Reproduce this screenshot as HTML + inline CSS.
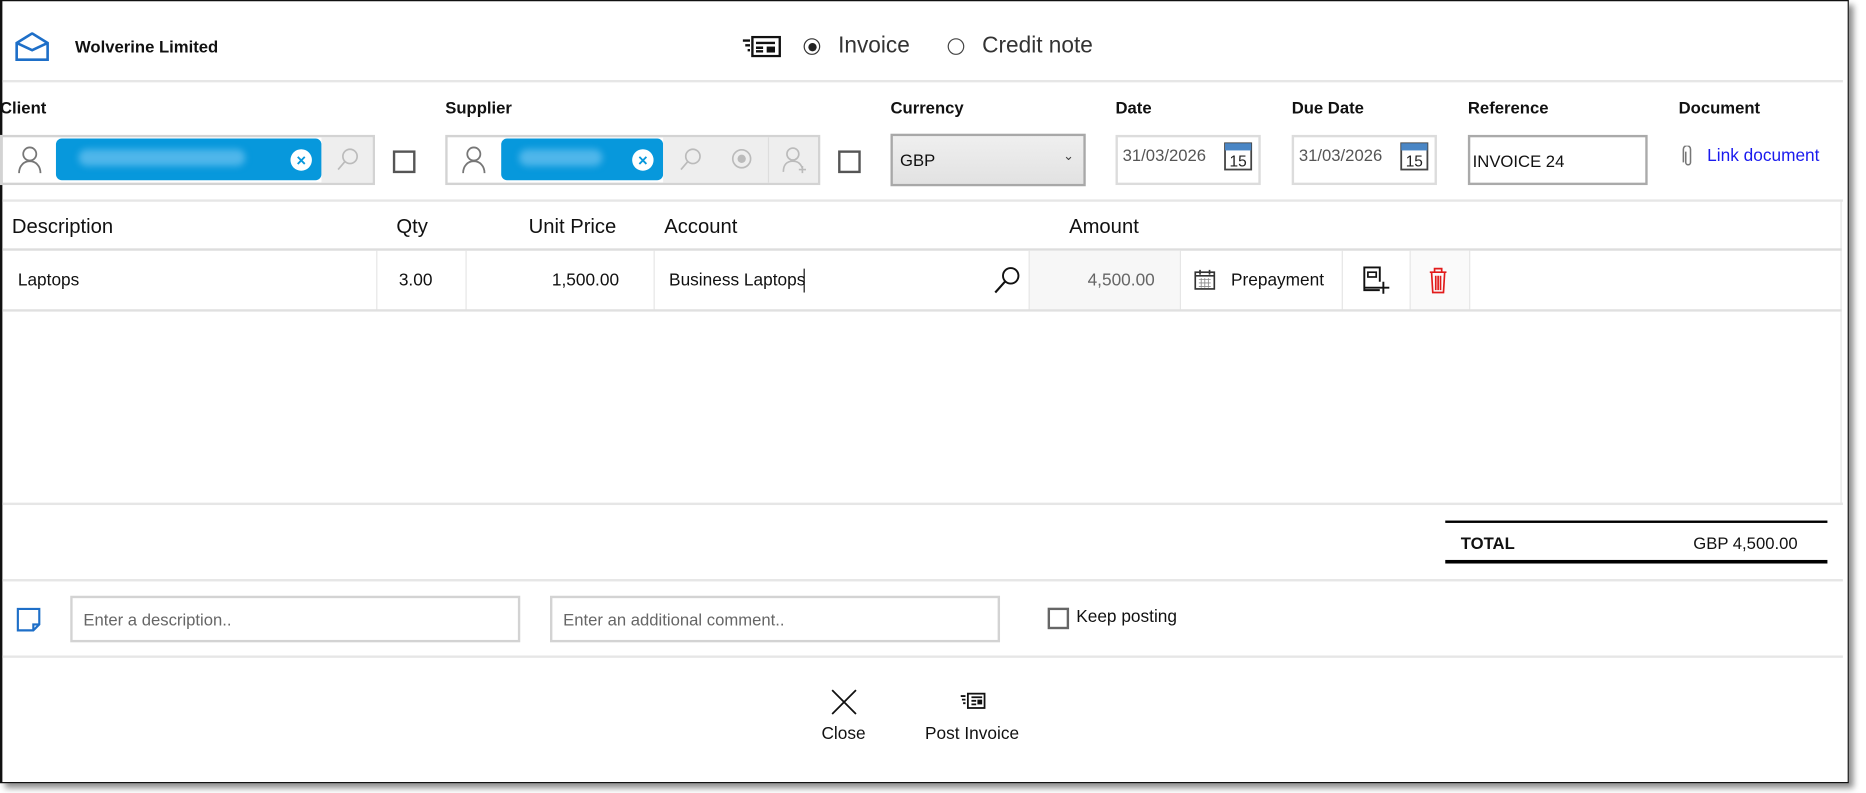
<!DOCTYPE html>
<html><head><meta charset="utf-8"><style>
html,body{margin:0;padding:0;background:#fff;width:1866px;height:793px;overflow:hidden}
#w{position:absolute;left:0;top:0;width:1563px;height:664px;transform:scale(1.1905,1.1939);transform-origin:0 0;font-family:"Liberation Sans",sans-serif;color:#111}
.a{position:absolute}
.win{left:0;top:0;width:1550px;height:654px;border:1px solid #111;border-left:2px solid #111;background:#fff;box-shadow:4px 4px 5px rgba(0,0,0,.45)}
.hl{height:2px;background:#e6e6e6}
.lbl{font-size:14px;font-weight:bold}
.box{border:2px solid #d3d3d3;box-sizing:border-box}
.vs{width:1px;background:#e6e6e6;top:210px;height:50px}
.th{font-size:17px;top:180px}
.td{font-size:14.5px;top:227px}
</style></head><body><div id="w">
<div class="a win"></div>
<svg class="a" style="left:12px;top:27px" width="30" height="25" viewBox="0 0 30 25"><path d="M2 9 L15 1 L28 9 V23 H2 Z M2 9 L15 15 L28 9" fill="none" stroke="#1e6fc8" stroke-width="2.2"/></svg>
<div class="a" style="left:63px;top:31px;font-size:14px;font-weight:bold">Wolverine Limited</div>
<svg class="a" style="left:622px;top:30px" width="34" height="18" viewBox="0 0 34 18"><rect x="10" y="1" width="23" height="16" fill="none" stroke="#111" stroke-width="2"/><path d="M2 4h6M4 8h4M6 12h2M13 6h16M13 10h6M13 13h6" stroke="#111" stroke-width="2"/><rect x="22" y="9" width="7" height="5" fill="#111"/></svg>
<div class="a" style="left:675px;top:32px;width:12px;height:12px;border:1.5px solid #333;border-radius:50%"></div>
<div class="a" style="left:679px;top:36px;width:7px;height:7px;background:#222;border-radius:50%"></div>
<div class="a" style="left:704px;top:28px;font-size:19px;color:#333">Invoice</div>
<div class="a" style="left:796px;top:32px;width:12px;height:12px;border:1.5px solid #444;border-radius:50%"></div>
<div class="a" style="left:825px;top:28px;font-size:19px;color:#333">Credit note</div>
<div class="a hl" style="left:2px;top:67px;width:1546px"></div>
<div class="a lbl" style="left:0;top:82px">Client</div>
<div class="a lbl" style="left:374px;top:82px">Supplier</div>
<div class="a lbl" style="left:748px;top:82px">Currency</div>
<div class="a lbl" style="left:937px;top:82px">Date</div>
<div class="a lbl" style="left:1085px;top:82px">Due Date</div>
<div class="a lbl" style="left:1233px;top:82px">Reference</div>
<div class="a lbl" style="left:1410px;top:82px">Document</div>
<div class="a box" style="left:0;top:113px;width:315px;height:42px"></div>
<svg class="a" style="left:15px;top:122px" width="20" height="24" viewBox="0 0 20 24"><circle cx="10" cy="7" r="5.5" fill="none" stroke="#777" stroke-width="1.5"/><path d="M1 23c0-6 4-10 9-10s9 4 9 10" fill="none" stroke="#777" stroke-width="1.5"/></svg>
<div class="a" style="left:47px;top:116px;width:223px;height:35px;background:#0798dc;border-radius:5px"></div>
<div class="a" style="left:66px;top:125px;width:140px;height:14px;background:#4fb6ea;border-radius:7px;filter:blur(3px)"></div>
<div class="a" style="left:244px;top:125px;width:18px;height:18px;background:#fff;border-radius:50%;color:#0798dc;font-size:14px;font-weight:bold;text-align:center;line-height:18px">×</div>
<div class="a" style="left:270px;top:115px;width:43px;height:38px;background:#eee"></div>
<svg class="a" style="left:282px;top:123px" width="20" height="20" viewBox="0 0 20 20"><circle cx="12" cy="8" r="6" fill="none" stroke="#bbb" stroke-width="1.4"/><path d="M8 12L2 19" stroke="#bbb" stroke-width="1.4"/></svg>
<div class="a" style="left:330px;top:126px;width:15px;height:15px;border:2px solid #555"></div>
<div class="a box" style="left:374px;top:113px;width:315px;height:42px"></div>
<svg class="a" style="left:388px;top:122px" width="20" height="24" viewBox="0 0 20 24"><circle cx="10" cy="7" r="5.5" fill="none" stroke="#777" stroke-width="1.5"/><path d="M1 23c0-6 4-10 9-10s9 4 9 10" fill="none" stroke="#777" stroke-width="1.5"/></svg>
<div class="a" style="left:421px;top:116px;width:136px;height:35px;background:#0798dc;border-radius:5px"></div>
<div class="a" style="left:436px;top:125px;width:70px;height:14px;background:#4fb6ea;border-radius:7px;filter:blur(3px)"></div>
<div class="a" style="left:531px;top:125px;width:18px;height:18px;background:#fff;border-radius:50%;color:#0798dc;font-size:14px;font-weight:bold;text-align:center;line-height:18px">×</div>
<div class="a" style="left:557px;top:115px;width:130px;height:38px;background:#eee"></div>
<div class="a" style="left:645px;top:115px;width:1px;height:38px;background:#ddd"></div>
<svg class="a" style="left:570px;top:123px" width="20" height="20" viewBox="0 0 20 20"><circle cx="12" cy="8" r="6" fill="none" stroke="#bbb" stroke-width="1.4"/><path d="M8 12L2 19" stroke="#bbb" stroke-width="1.4"/></svg>
<svg class="a" style="left:614px;top:124px" width="18" height="18" viewBox="0 0 18 18"><circle cx="9" cy="9" r="7.5" fill="none" stroke="#bbb" stroke-width="1.4"/><circle cx="9" cy="9" r="3.5" fill="#bbb"/></svg>
<svg class="a" style="left:657px;top:122px" width="22" height="24" viewBox="0 0 22 24"><circle cx="9" cy="7" r="5" fill="none" stroke="#bbb" stroke-width="1.4"/><path d="M1 22c0-6 3-9 8-9s7 3 8 6M17 17v6M14 20h6" fill="none" stroke="#bbb" stroke-width="1.4"/></svg>
<div class="a" style="left:704px;top:126px;width:15px;height:15px;border:2px solid #555"></div>
<div class="a" style="left:748px;top:112px;width:164px;height:44px;box-sizing:border-box;border:2px solid #a8a8a8;background:linear-gradient(#efefef,#e2e2e2)"></div>
<div class="a" style="left:756px;top:126px;font-size:14px">GBP</div>
<div class="a" style="left:893px;top:124px;font-size:11px;color:#444">⌄</div>
<div class="a box" style="left:937px;top:113px;width:122px;height:42px;border-color:#dcdcdc"></div>
<div class="a" style="left:943px;top:122px;font-size:14px;color:#555">31/03/2026</div>
<div class="a box" style="left:1085px;top:113px;width:122px;height:42px;border-color:#dcdcdc"></div>
<div class="a" style="left:1091px;top:122px;font-size:14px;color:#555">31/03/2026</div>
<svg class="a" style="left:1028px;top:119px" width="24" height="24" viewBox="0 0 24 24"><rect x="1" y="1" width="22" height="22" fill="#fff" stroke="#444" stroke-width="1.5"/><rect x="1" y="1" width="22" height="6" fill="#4a86c5"/><text x="12" y="20.5" font-size="13" text-anchor="middle" font-family="Liberation Sans" fill="#222">15</text></svg>
<svg class="a" style="left:1176px;top:119px" width="24" height="24" viewBox="0 0 24 24"><rect x="1" y="1" width="22" height="22" fill="#fff" stroke="#444" stroke-width="1.5"/><rect x="1" y="1" width="22" height="6" fill="#4a86c5"/><text x="12" y="20.5" font-size="13" text-anchor="middle" font-family="Liberation Sans" fill="#222">15</text></svg>
<div class="a box" style="left:1233px;top:113px;width:151px;height:42px;border-color:#aaa"></div>
<div class="a" style="left:1237px;top:127px;font-size:14px">INVOICE 24</div>
<svg class="a" style="left:1413px;top:122px" width="10" height="18" viewBox="0 0 10 18"><path d="M3 5v9a2 2 0 0 0 4 0V3a3 3 0 0 0-6 0v11" fill="none" stroke="#777" stroke-width="1.3"/></svg>
<div class="a" style="left:1434px;top:123px;font-size:14.5px;color:#1a1aee">Link document</div>
<div class="a hl" style="left:2px;top:167px;width:1546px"></div>
<div class="a" style="left:1546px;top:168px;width:1px;height:255px;background:#e6e6e6"></div>
<div class="a th" style="left:10px">Description</div>
<div class="a th" style="left:333px">Qty</div>
<div class="a th" style="left:444px">Unit Price</div>
<div class="a th" style="left:558px">Account</div>
<div class="a th" style="left:898px">Amount</div>
<div class="a hl" style="left:2px;top:208px;width:1545px;background:#ddd"></div>
<div class="a" style="left:864px;top:210px;width:127px;height:50px;background:#f7f7f7"></div>
<div class="a" style="left:1184px;top:210px;width:50px;height:50px;background:#fafafa"></div>
<div class="a vs" style="left:316px"></div><div class="a vs" style="left:391px"></div><div class="a vs" style="left:549px"></div><div class="a vs" style="left:864px"></div><div class="a vs" style="left:991px"></div><div class="a vs" style="left:1127px"></div><div class="a vs" style="left:1184px"></div><div class="a vs" style="left:1234px"></div>
<div class="a td" style="left:15px">Laptops</div>
<div class="a td" style="left:335px">3.00</div>
<div class="a td" style="left:400px;width:120px;text-align:right">1,500.00</div>
<div class="a td" style="left:562px">Business Laptops</div>
<div class="a" style="left:675px;top:225px;width:1px;height:20px;background:#111"></div>
<svg class="a" style="left:834px;top:222px" width="24" height="24" viewBox="0 0 24 24"><circle cx="15" cy="9" r="6.5" fill="none" stroke="#111" stroke-width="1.6"/><path d="M10.5 13.5L2 23" stroke="#111" stroke-width="1.8"/></svg>
<div class="a td" style="left:870px;width:100px;text-align:right;color:#666">4,500.00</div>
<svg class="a" style="left:1003px;top:225px" width="18" height="18" viewBox="0 0 18 18"><rect x="1" y="3" width="16" height="14" fill="none" stroke="#333" stroke-width="1.4"/><path d="M1 6h16M5 1v4M13 1v4" stroke="#333" stroke-width="1.4"/><path d="M4 9h10M4 12h10M4 15h10M6 8v8M9 8v8M12 8v8" stroke="#888" stroke-width=".7"/></svg>
<div class="a td" style="left:1034px">Prepayment</div>
<svg class="a" style="left:1143px;top:222px" width="26" height="26" viewBox="0 0 26 26"><path d="M16 21H3V2h13v12" fill="none" stroke="#111" stroke-width="1.6"/><rect x="6" y="6" width="7" height="4" fill="none" stroke="#111" stroke-width="1.4"/><path d="M3 19h12M19 14v10M14 19h10" stroke="#111" stroke-width="1.6"/></svg>
<svg class="a" style="left:1199px;top:223px" width="18" height="24" viewBox="0 0 18 24"><path d="M2 5h14M6 5V2h6v3M3.5 5l1 17h9l1-17M7 8v12M9 8v12M11 8v12" fill="none" stroke="#e21b1b" stroke-width="1.4"/></svg>
<div class="a hl" style="left:2px;top:259px;width:1545px;background:#e0e0e0"></div>
<div class="a hl" style="left:2px;top:421px;width:1546px"></div>
<div class="a" style="left:1214px;top:436px;width:321px;height:2px;background:#000"></div>
<div class="a" style="left:1227px;top:447px;font-size:14px;font-weight:bold">TOTAL</div>
<div class="a" style="left:1380px;top:447px;width:130px;text-align:right;font-size:14px">GBP 4,500.00</div>
<div class="a" style="left:1214px;top:469px;width:321px;height:3px;background:#000"></div>
<div class="a hl" style="left:2px;top:485px;width:1546px"></div>
<svg class="a" style="left:13px;top:508px" width="22" height="22" viewBox="0 0 22 22"><path d="M2 2h18v13l-5 5H2z M20 15h-5v5" fill="none" stroke="#1e6fc8" stroke-width="1.8"/></svg>
<div class="a box" style="left:59px;top:499px;width:378px;height:39px"></div>
<div class="a" style="left:70px;top:511px;font-size:14px;color:#666">Enter a description..</div>
<div class="a box" style="left:462px;top:499px;width:378px;height:39px"></div>
<div class="a" style="left:473px;top:511px;font-size:14px;color:#666">Enter an additional comment..</div>
<div class="a" style="left:880px;top:509px;width:14px;height:14px;border:2px solid #666"></div>
<div class="a" style="left:904px;top:509px;font-size:14.5px">Keep posting</div>
<div class="a hl" style="left:2px;top:549px;width:1546px"></div>
<svg class="a" style="left:697px;top:576px" width="24" height="24" viewBox="0 0 24 24"><path d="M2 2L22 22M22 2L2 22" stroke="#111" stroke-width="1.5"/></svg>
<div class="a" style="left:690px;top:607px;font-size:14.5px">Close</div>
<svg class="a" style="left:806px;top:580px" width="22" height="14" viewBox="0 0 22 14"><rect x="7" y="1" width="14" height="12" fill="none" stroke="#111" stroke-width="1.5"/><path d="M1 3h4M2 6h3M3 9h2M10 4h9M10 7h4M10 10h4" stroke="#111" stroke-width="1.5"/><rect x="15" y="6" width="4" height="4" fill="#111"/></svg>
<div class="a" style="left:777px;top:607px;font-size:14.5px">Post Invoice</div>
</div></body></html>
